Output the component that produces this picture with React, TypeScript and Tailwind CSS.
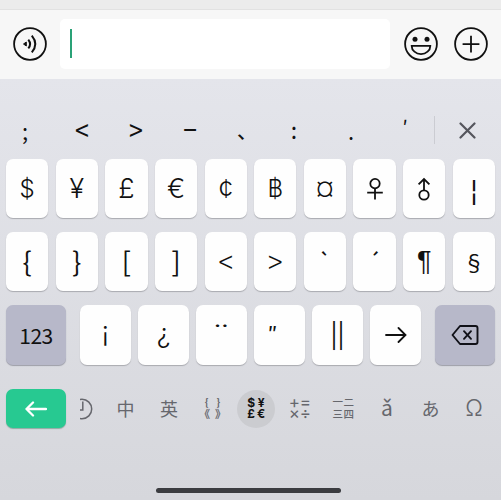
import type React from "react"

type KeyItem = { label: React.ReactNode; className?: string }

const FemaleIcon = () => (
  <svg width="18" height="24" viewBox="0 0 18 24" fill="none" stroke="#111" strokeWidth="1.8">
    <circle cx="9" cy="6.6" r="4.7" />
    <path d="M9 11.300V22.500M1.200 15.700h15.600" />
  </svg>
)

const MaleIcon = () => (
  <svg width="18" height="24" viewBox="0 0 18 24" fill="none" stroke="#111" strokeWidth="1.8">
    <circle cx="9" cy="18" r="4.7" />
    <path d="M9 13.300V2.200M3.600 7.400L9 2l5.400 5.400" />
  </svg>
)

const ArrowRight = () => (
  <svg width="22" height="16" viewBox="0 0 22 16" fill="none" stroke="#111" strokeWidth="1.8" strokeLinecap="round">
    <path d="M1 8h19.500M13.500 1l7 7-7 7" />
  </svg>
)

const candidates: KeyItem[] = [
  { label: ";", className: "-translate-x-[2px] text-[22px]" },
  { label: "<", className: "translate-x-[1px] -translate-y-[2px] scale-y-115 text-[25px]" },
  { label: ">", className: "translate-x-[1px] -translate-y-[2px] scale-y-115 text-[25px]" },
  { label: "−", className: "translate-x-[1px] -translate-y-px font-medium text-[24px]" },
  { label: "、", className: "translate-x-[4px] translate-y-px font-medium text-[20px]" },
  { label: ":", className: "-translate-x-[3px] -translate-y-px text-[23px]" },
  { label: ".", className: "text-[22px]" },
  { label: "′", className: "-translate-y-[3px] text-[20px]" },
]

const rowOne: KeyItem[] = [
  { label: "$", className: "font-['Inter'] font-[350] text-[24px]" },
  { label: "¥", className: "font-['Inter'] font-[350] text-[27px]" },
  { label: "£", className: "font-['Inter'] font-[350] text-[27px]" },
  { label: "€", className: "font-['Inter'] font-[350] text-[27px]" },
  { label: "¢", className: "font-['Inter'] font-[350] text-[26px]" },
  { label: "฿", className: "font-['Inter'] font-[350] text-[24px]" },
  { label: "¤", className: "font-['Inter'] font-[350] text-[25px]" },
  { label: <FemaleIcon /> },
  { label: <MaleIcon /> },
  { label: "¦", className: "font-bold text-[22px]" },
]

const rowTwo: KeyItem[] = [
  { label: "{", className: "-translate-y-px text-[27px]" },
  { label: "}", className: "-translate-y-px text-[27px]" },
  { label: "[", className: "-translate-y-px text-[27px]" },
  { label: "]", className: "-translate-y-px text-[27px]" },
  { label: "<", className: "-translate-y-px scale-y-120 text-[27px] font-light" },
  { label: ">", className: "-translate-y-px scale-y-120 text-[27px] font-light" },
  { label: "`", className: "-translate-y-[2px] font-medium text-[19px]" },
  { label: "´", className: "-translate-y-[2px] font-medium text-[19px]" },
  { label: "¶", className: "font-['Liberation_Sans'] text-[27px]" },
  { label: "§", className: "-translate-y-px text-[22px]" },
]

const rowThree: KeyItem[] = [
  { label: "¡", className: "font-['Inter'] -translate-y-[4px] font-[350] text-[27px]" },
  { label: "¿", className: "font-['Inter'] -translate-y-[2px] font-[350] text-[27px]" },
  { label: "¨", className: "font-['Inter'] scale-x-130 font-light text-[28px]" },
  { label: "″", className: "-translate-x-[7px] -translate-y-[3px] font-medium text-[18px]" },
  { label: "||", className: "-translate-y-[3px] text-[26px]" },
  { label: <ArrowRight /> },
]

const Key: React.FC<{ item: KeyItem }> = ({ item }) => (
  <button className="flex h-full min-w-0 flex-1 items-center justify-center rounded-[7px] bg-[#fefefe] leading-none text-[#111] shadow-[0_1px_1px_#a9aab0]">
    <span className={item.className}>{item.label}</span>
  </button>
)

const InputBar = () => (
  <div className="flex h-[70px] items-center border-t border-[#e2e2e2] bg-[#f7f7f7] px-[13px] pb-[2px]">
    <svg width="34" height="34" viewBox="0 0 34 34" fill="none" stroke="#111" strokeWidth="1.8">
      <circle cx="17" cy="17" r="15.9" />
      <path d="M10.500 17l2.800-2v4z" fill="#111" strokeWidth="1" />
      <path d="M15.300 12.600q3.600 4.400 0 8.800M18.800 8.600q7 8.400 0 16.800" strokeWidth="2" />
    </svg>
    <div className="ml-[13px] flex h-[50px] w-[330px] items-center rounded-[5px] bg-white pl-[10px]">
      <div className="h-[29px] w-[2px] bg-[#2aa277]"></div>
    </div>
    <svg className="ml-[14px]" width="34" height="34" viewBox="0 0 34 34" fill="none" stroke="#111" strokeWidth="1.8">
      <circle cx="17" cy="17" r="15.9" />
      <circle cx="11" cy="12.300" r="2.500" fill="#111" stroke="none" />
      <circle cx="23" cy="12.300" r="2.500" fill="#111" stroke="none" />
      <path d="M7.700 18.900h18.600a9.300 8.200 0 0 1-18.600 0z" />
    </svg>
    <svg className="ml-4" width="34" height="34" viewBox="0 0 34 34" fill="none" stroke="#111" strokeWidth="1.8">
      <circle cx="17" cy="17" r="15.9" />
      <path d="M17 8.800v16.800M8.600 17.200h16.800" />
    </svg>
  </div>
)

function App() {
  return (
    <div className="h-[500px] w-[501px] overflow-hidden bg-[#ececec] pt-[9px] font-['Noto_Sans_CJK_SC',sans-serif]">
      <InputBar />

      <div className="flex h-[421px] flex-col bg-linear-to-b from-[#e4e5eb] to-[#d6d7dc] pt-[37px]">
        {/* Candidate symbols */}
        <div className="flex h-7 shrink-0 items-center text-[#111]">
          {candidates.map((item, i) => (
            <div key={i} className="flex w-[54px] shrink-0 justify-center leading-none">
              <span className={item.className}>{item.label}</span>
            </div>
          ))}
          <div className="ml-[2px] h-7 w-px bg-[#cbccd2]"></div>
          <svg className="ml-6" width="17" height="17" viewBox="0 0 17 17" stroke="#55565d" strokeWidth="2.200" strokeLinecap="round">
            <path d="M1.500 1.500l14 14M15.500 1.500l-14 14" />
          </svg>
        </div>

        <div className="mt-[15px] flex h-[59px] shrink-0 gap-[7.4px] px-[6px]">
          {rowOne.map((item, i) => <Key key={i} item={item} />)}
        </div>
        <div className="mt-[14px] flex h-[59px] shrink-0 gap-[7.4px] px-[6px]">
          {rowTwo.map((item, i) => <Key key={i} item={item} />)}
        </div>

        <div className="mt-[14px] flex h-[60px] shrink-0 px-[6px]">
          <button className="w-[60px] rounded-[7px] bg-[#b7b8c9] text-[21px] leading-none tracking-[-0.5px] text-[#111] shadow-[0_1px_1px_#9d9ea8]">123</button>
          <div className="mx-[14px] flex flex-1 gap-[7.4px]">
            {rowThree.map((item, i) => <Key key={i} item={item} />)}
          </div>
          <button className="flex w-[60px] items-center justify-center rounded-[7px] bg-[#b7b8c9] shadow-[0_1px_1px_#9d9ea8]">
            <svg width="28" height="20" viewBox="0 0 28 20" fill="none" stroke="#111118" strokeWidth="1.900" strokeLinecap="round" strokeLinejoin="round">
              <path d="M9 1h15.500q2 0 2 2v14q0 2-2 2H9L1.500 10z" />
              <path d="M13 6.200l7 7.600M20 6.200l-7 7.600" />
            </svg>
          </button>
        </div>

        {/* Category tabs */}
        <div className="mt-6 flex h-[39px] shrink-0 pl-[6px] text-[#66676d]">
          <button className="flex w-[60px] shrink-0 items-center justify-center rounded-[7px] bg-[#27c991] shadow-[0_1px_1px_#8fa9a2]">
            <svg width="22" height="16" viewBox="0 0 22 16" fill="none" stroke="#fff" strokeWidth="2.300" strokeLinecap="round" strokeLinejoin="round">
              <path d="M21 8H1.500M8 1.500L1.500 8 8 14.500" />
            </svg>
          </button>
          <div className="ml-[14px] flex flex-1 items-center overflow-hidden text-lg leading-none">
            <div className="-ml-[20px] flex w-[43.6px] shrink-0 justify-center">
              <svg width="22" height="22" viewBox="0 0 22 22" fill="none" stroke="#66676d" strokeWidth="1.500">
                <circle cx="11" cy="11" r="9.700" />
                <path d="M11.800 3.500v8.500h-3" />
              </svg>
            </div>
            <span className="w-[43.6px] shrink-0 -translate-y-px text-center">中</span>
            <span className="w-[43.6px] shrink-0 -translate-y-px text-center">英</span>
            <div className="flex w-[43.6px] shrink-0 -translate-y-px flex-col items-center font-bold">
              <div className="flex gap-[8px] text-[10px] leading-[10px]">
                <span>{"{"}</span><span>{"}"}</span>
              </div>
              <div className="flex gap-[5px] text-[11px] leading-[12px]">
                <span>《</span><span>》</span>
              </div>
            </div>
            <div className="flex w-[43.6px] shrink-0 justify-center">
              <div className="grid size-[38px] shrink-0 grid-cols-[10px_10px] place-content-center rounded-full bg-[#cbccd0] text-center font-['Inter'] text-[12px] font-bold leading-[10.5px] text-[#111]">
                <span>$</span><span>¥</span><span>£</span><span>€</span>
              </div>
            </div>
            <div className="grid w-[43.6px] shrink-0 -translate-y-px grid-cols-[11px_11px] justify-center text-center font-['Inter'] text-[17px] leading-[11px]">
              <span>+</span><span>=</span><span>×</span><span>÷</span>
            </div>
            <div className="grid w-[43.6px] shrink-0 -translate-y-px grid-cols-[11px_11px] justify-center text-center text-[10.5px] font-medium leading-[12px]">
              <span>一</span><span>二</span><span>三</span><span>四</span>
            </div>
            <span className="w-[43.6px] shrink-0 -translate-y-px text-center text-[21px]">ǎ</span>
            <span className="w-[43.6px] shrink-0 -translate-y-px text-center">あ</span>
            <span className="w-[43.6px] shrink-0 text-center font-['Inter'] text-[23px] font-light">Ω</span>
          </div>
        </div>

        <div className="ml-[156px] mt-[60px] h-[4.5px] w-[185px] shrink-0 rounded-full bg-[#3b3c40]"></div>
      </div>
    </div>
  )
}

export default App
